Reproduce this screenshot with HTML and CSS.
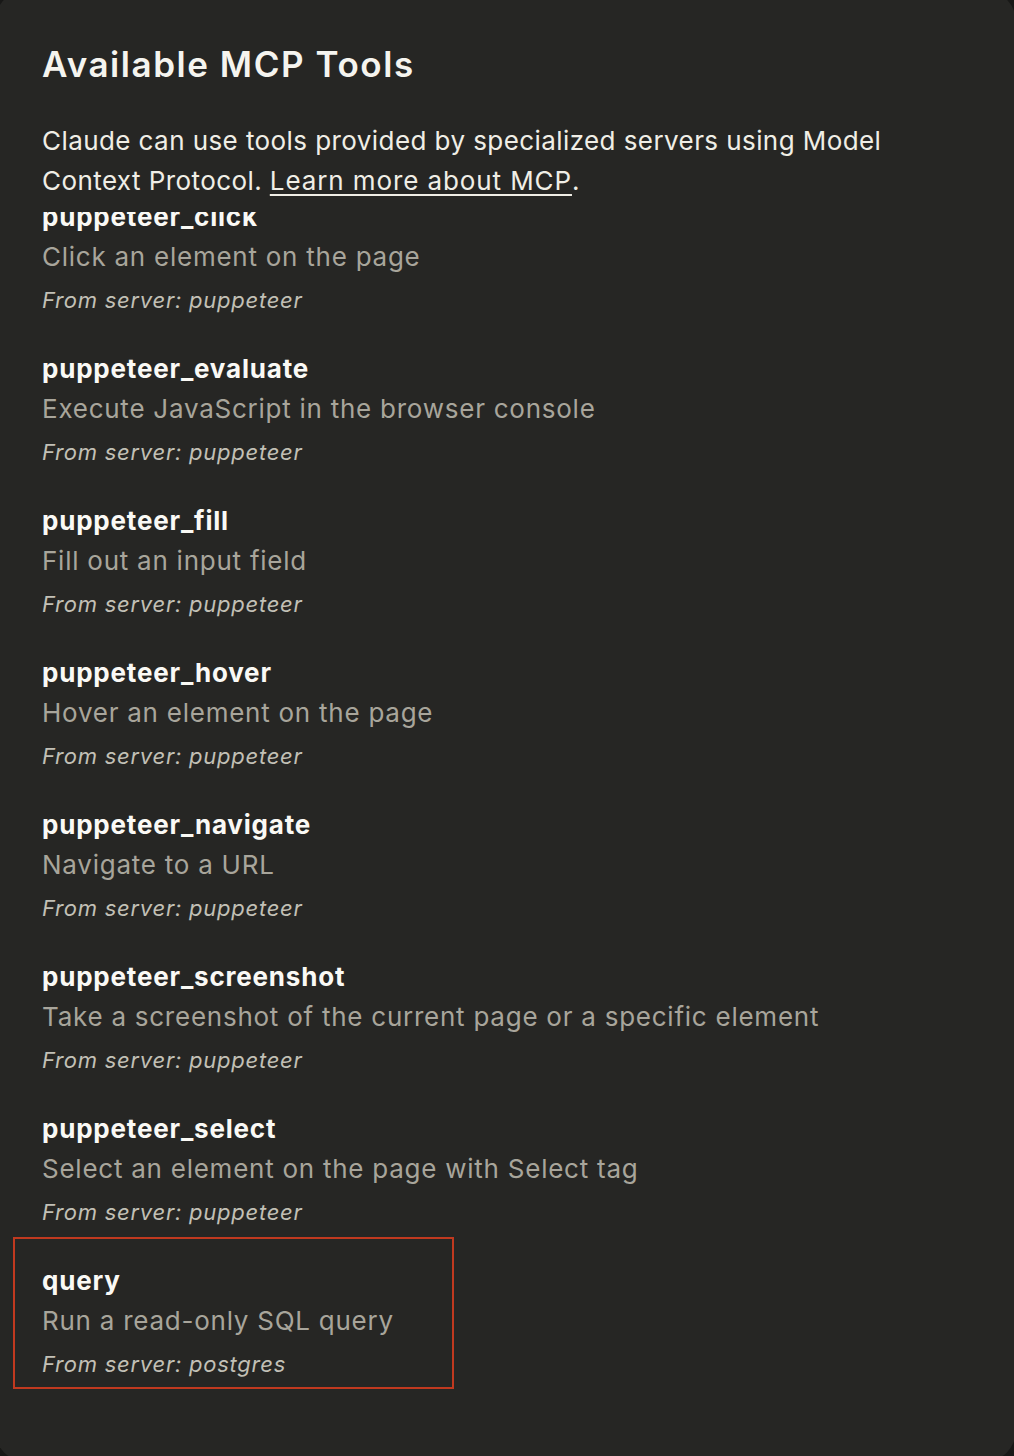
FILE: index.html
```html
<!DOCTYPE html>
<html lang="en">
<head>
<meta charset="utf-8">
<title>Available MCP Tools</title>
<link rel="stylesheet" href="styles.css">
</head>
<body>
<div class="panel">
  <h1 class="title">Available MCP Tools</h1>
  <p class="intro">Claude can use tools provided by specialized servers using Model Context Protocol. <a class="link" href="#">Learn more about MCP</a>.</p>
  <div class="scroller">
    <ul class="tools">
      <li class="tool">
        <div class="name">puppeteer_click</div>
        <div class="desc">Click an element on the page</div>
        <div class="from">From server: puppeteer</div>
      </li>
      <li class="tool">
        <div class="name">puppeteer_evaluate</div>
        <div class="desc">Execute JavaScript in the browser console</div>
        <div class="from">From server: puppeteer</div>
      </li>
      <li class="tool">
        <div class="name">puppeteer_fill</div>
        <div class="desc">Fill out an input field</div>
        <div class="from">From server: puppeteer</div>
      </li>
      <li class="tool">
        <div class="name">puppeteer_hover</div>
        <div class="desc">Hover an element on the page</div>
        <div class="from">From server: puppeteer</div>
      </li>
      <li class="tool">
        <div class="name">puppeteer_navigate</div>
        <div class="desc">Navigate to a URL</div>
        <div class="from">From server: puppeteer</div>
      </li>
      <li class="tool">
        <div class="name">puppeteer_screenshot</div>
        <div class="desc">Take a screenshot of the current page or a specific element</div>
        <div class="from">From server: puppeteer</div>
      </li>
      <li class="tool">
        <div class="name">puppeteer_select</div>
        <div class="desc">Select an element on the page with Select tag</div>
        <div class="from">From server: puppeteer</div>
      </li>
      <li class="tool tool-highlight">
        <div class="name">query</div>
        <div class="desc">Run a read-only SQL query</div>
        <div class="from">From server: postgres</div>
      </li>
    </ul>
  </div>
</div>
</body>
</html>
```

FILE: styles.css
```css
html, body {
  margin: 0;
  padding: 0;
}
body {
  background: #181817;
  width: 1014px;
  height: 1456px;
  overflow: hidden;
  font-family: Inter, "Noto Sans", sans-serif;
}
.panel {
  background: #262624;
  border-radius: 32px;
  margin: -10px -2px 0 -5px;
  height: 1472px;
  padding: 0 0 0 47px;
  box-sizing: border-box;
  overflow: hidden;
}
.title {
  margin: 0;
  padding-top: 52px;
  font-size: 35px;
  line-height: 44px;
  font-weight: 600;
  color: #f5f4ef;
  letter-spacing: 1.55px;
}
.intro {
  margin: 35px 0 0 0;
  font-size: 26px;
  line-height: 40px;
  color: #f0eee6;
  letter-spacing: 0.42px;
  width: 900px;
}
.link {
  color: #f0eee6;
  text-decoration: underline;
  text-underline-offset: 4px;
  text-decoration-thickness: 2px;
  letter-spacing: 0.9px;
}
.scroller {
  margin: 11px 0 0 -40px;
  padding-left: 40px;
  height: 1300px;
  overflow: hidden;
}
.tools {
  list-style: none;
  margin: -15px 0 0 0;
  padding: 0;
  display: flex;
  flex-direction: column;
  gap: 29px;
}
.tool {
  display: flex;
  flex-direction: column;
}
.name {
  font-size: 26px;
  line-height: 40px;
  font-weight: 700;
  color: #faf9f5;
  letter-spacing: 0.8px;
}
.desc {
  font-size: 26px;
  line-height: 40px;
  color: #a8a59b;
  letter-spacing: 0.75px;
}
.from {
  font-size: 22px;
  line-height: 40px;
  font-style: italic;
  color: #c2c0b6;
  letter-spacing: 0.75px;
  margin-top: 3px;
}
.tool-highlight {
  position: relative;
}
.tool-highlight::after {
  content: "";
  position: absolute;
  left: -29px;
  top: -24px;
  width: 441px;
  height: 152px;
  border: 2px solid #c0391f;
  box-sizing: border-box;
  pointer-events: none;
}
```
